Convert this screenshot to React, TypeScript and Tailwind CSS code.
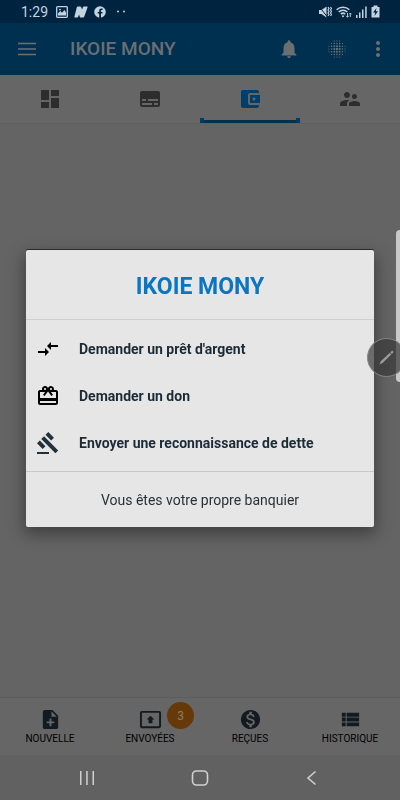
import React from 'react';
import type { IconType } from 'react-icons';
import {
  MdAccountBalanceWallet,
  MdCardGiftcard,
  MdCompareArrows,
  MdDashboard,
  MdGavel,
  MdMonetizationOn,
  MdMoreVert,
  MdNoteAdd,
  MdNotifications,
  MdPresentToAll,
  MdSubtitles,
  MdSupervisorAccount,
  MdViewList,
} from 'react-icons/md';

const TABS: { label: string; icon: IconType; active?: boolean }[] = [
  { label: 'Tableau de bord', icon: MdDashboard },
  { label: 'Cartes', icon: MdSubtitles },
  { label: 'Portefeuille', icon: MdAccountBalanceWallet, active: true },
  { label: 'Contacts', icon: MdSupervisorAccount },
];

const ACTIONS: { label: string; icon: IconType; color: string }[] = [
  { label: "Demander un prêt d'argent", icon: MdCompareArrows, color: 'text-black' },
  { label: 'Demander un don', icon: MdCardGiftcard, color: 'text-black' },
  { label: 'Envoyer une reconnaissance de dette', icon: MdGavel, color: 'text-[#22313c]' },
];

const NAV: { label: string; icon: IconType; badge?: number }[] = [
  { label: 'NOUVELLE', icon: MdNoteAdd },
  { label: 'ENVOYÉES', icon: MdPresentToAll, badge: 3 },
  { label: 'REÇUES', icon: MdMonetizationOn },
  { label: 'HISTORIQUE', icon: MdViewList },
];

// round halftone: dots shrink towards the rim
const DOTS = [-3, -2, -1, 0, 1, 2, 3].flatMap((x) =>
  [-3, -2, -1, 0, 1, 2, 3]
    .filter((y) => Math.hypot(x, y) < 3.3)
    .map((y) => ({ x, y, r: 1.25 - Math.hypot(x, y) * 0.22 })),
);

function HalftoneIcon() {
  return (
    <svg width="18" height="18" viewBox="0 0 18 18" fill="currentColor">
      {DOTS.map(({ x, y, r }) => (
        <circle key={`${x},${y}`} cx={9 + x * 2.7} cy={9 + y * 2.7} r={r} />
      ))}
    </svg>
  );
}

function StatusBar() {
  return (
    <div className="flex h-[23px] items-center bg-[#002440] pl-[21px] pr-5 text-[#c3d3e0]">
      <span className="text-[14px] leading-none">1:29</span>
      <div className="ml-2 flex items-center gap-1.5">
        <svg width="12" height="12" viewBox="0 0 12 12" fill="none" stroke="currentColor">
          <rect x="0.7" y="0.7" width="10.6" height="10.6" rx="0.8" strokeWidth="1.3" />
          <path d="M2 9.5V7.500l2.200-2.500 1.800 1.800L8.500 4 10 6.500v3z" fill="currentColor" stroke="none" />
          <circle cx="4" cy="3.600" r="0.900" fill="currentColor" stroke="none" />
        </svg>
        <svg width="14" height="12" viewBox="0 0 14 12" fill="currentColor">
          <path d="M2.800 1.200Q3.200.500 4 .500h2.200q.600 0 .900.600l1 2.400.800-2.300q.300-.700 1-.700h3.100q.900 0 .600.800l-3.300 9.300q-.300.900-1.200.900H6.800q-.700 0-.900-.600L5 8.500l-.800 2.200q-.300.800-1.100.800H.900q-.800 0-.500-.800z" />
        </svg>
        <svg width="12" height="12" viewBox="0 0 12 12">
          <circle cx="6" cy="6" r="5.800" fill="currentColor" />
          <path d="M5.200 12V7.600H3.700V5.900h1.500V4.700c0-1.500.9-2.300 2.200-2.300.6 0 1.200.1 1.200.1V4h-.7c-.700 0-.900.4-.9.900v1h1.600l-.3 1.700H7V12z" fill="#002440" />
        </svg>
        <svg width="10" height="12" viewBox="0 0 10 12" fill="currentColor" className="ml-1">
          <circle cx="2" cy="5.500" r="1" />
          <circle cx="8" cy="5.500" r="1" />
        </svg>
      </div>
      <div className="ml-auto flex items-center gap-1">
        <svg width="13" height="12" viewBox="0 0 13 12" fill="currentColor">
          <path d="M0 4h2.500L7.500 .500v11L2.500 8H0z" />
          <path d="M0 .500l8.500 10.500" stroke="#002440" strokeWidth="1" />
          <path d="M9 1l1 1.500L9 4l1 1.500L9 7l1 1.500L9 10M11.500 1l1 1.500-1 1.500 1 1.500-1 1.500 1 1.500-1 1.500" fill="none" stroke="currentColor" strokeWidth="1.200" />
        </svg>
        <svg width="16" height="12" viewBox="0 0 16 12" fill="none" stroke="currentColor" strokeWidth="1.500">
          <path d="M.600 3.800a9.200 9.200 0 0 1 12.800 0M2.700 6a6.200 6.200 0 0 1 8.600 0M4.800 8.200a3.200 3.200 0 0 1 4.400 0" />
          <circle cx="7" cy="10.200" r="1" fill="currentColor" stroke="none" />
          <path d="M11.500 7v4M10.200 9.800l1.300 1.500 1.300-1.500M14.300 11V7M13.200 8.300l1.100-1.300 1.200 1.300" strokeWidth="0.900" />
        </svg>
        <svg width="11" height="12" viewBox="0 0 11 12" fill="currentColor">
          <path d="M0 9h1.500v3H0zM3 6.500h1.500V12H3zM6 3.500h1.500V12H6zM9.200.500h1.500V12H9.200z" />
        </svg>
        <svg width="9" height="13" viewBox="0 0 9 13">
          <path d="M2.500.500h4V2h2v10.500H.5V2h2z" fill="currentColor" />
          <path d="M5.500 3L2 7.500h2.200L3.500 11 7 6.300H4.800z" fill="#002440" />
        </svg>
      </div>
    </div>
  );
}

function Header() {
  return (
    <header className="flex h-[52px] items-center bg-[#003050] px-[18px] text-[#6b6f72]">
      <button type="button" aria-label="Menu">
        <svg width="18" height="14" viewBox="0 0 18 14" fill="none" stroke="currentColor" strokeWidth="1.300">
          <path d="M0 1.500h18M0 7h18M0 12.500h18" />
        </svg>
      </button>
      <h1 className="ml-[34px] text-[19px] font-medium leading-6">IKOIE MONY</h1>
      <div className="-mr-2 ml-auto flex items-center">
        <button type="button" aria-label="Notifications" className="mr-7">
          <MdNotifications size={22} />
        </button>
        <button type="button" aria-label="Flou" className="mr-5">
          <HalftoneIcon />
        </button>
        <button type="button" aria-label="Plus">
          <MdMoreVert size={24} />
        </button>
      </div>
    </header>
  );
}

function Tabs() {
  return (
    <nav className="grid h-[49px] grid-cols-4 border-b border-[#606060] bg-[#666666]">
      {TABS.map(({ label, icon: Icon, active }) => (
        <button
          key={label}
          type="button"
          aria-label={label}
          className={`relative flex items-center justify-center ${active ? 'text-[#003f6b]' : 'text-[#2d2d2d]'}`}
        >
          <Icon size={24} />
          {active && (
            <span className="absolute inset-x-0 bottom-0 h-[5px] border-x-4 border-[#003a66]">
              <span className="mt-0.5 block h-[3px] bg-[#003050]" />
            </span>
          )}
        </button>
      ))}
    </nav>
  );
}

function BottomNav() {
  return (
    <nav className="grid h-[58px] grid-cols-4 border-t border-[#5d5d5d] bg-[#666666]">
      {NAV.map(({ label, icon: Icon, badge }) => (
        <button
          key={label}
          type="button"
          className="relative flex flex-col items-center pt-[10px] text-[#121b22]"
        >
          <Icon size={23} />
          <span className="mt-0.5 text-[10px] leading-3 text-black">{label}</span>
          {badge && (
            <span className="absolute left-[67px] top-1 flex size-[27px] items-center justify-center rounded-full bg-[#663a08] text-[12px] text-[#8f7b66]">
              {badge}
            </span>
          )}
        </button>
      ))}
    </nav>
  );
}

function SystemNav() {
  return (
    <div className="grid h-[45px] grid-cols-[1fr_auto_1fr] items-center bg-[#616161] text-[#d0d0d0]">
      <button type="button" aria-label="Applications récentes" className="mr-24 justify-self-end">
        <svg width="16" height="16" viewBox="0 0 16 16" fill="currentColor">
          <path d="M1 1h1.500v14H1zM7.200 1h1.500v14H7.200zM13.500 1H15v14h-1.500z" />
        </svg>
      </button>
      <button type="button" aria-label="Accueil">
        <svg width="18" height="16" viewBox="0 0 18 16" fill="none" stroke="currentColor" strokeWidth="1.600">
          <rect x="1.500" y="1" width="15" height="14" rx="4" />
        </svg>
      </button>
      <button type="button" aria-label="Retour" className="ml-24 justify-self-start">
        <svg width="16" height="16" viewBox="0 0 16 16" fill="none" stroke="currentColor" strokeWidth="1.600">
          <path d="M10.500 1.500L3 8l7.500 6.500" />
        </svg>
      </button>
    </div>
  );
}

function ActionDialog() {
  return (
    <div className="fixed inset-0 flex items-center justify-center px-[26px] pb-[47px] pt-6">
      <div
        role="dialog"
        aria-labelledby="dialog-title"
        className="w-full rounded-xs bg-[#e6e6e6] shadow-[0_-1px_0_#2a2a2a,0_6px_16px_2px_rgba(0,0,0,0.35)]"
      >
        <h2
          id="dialog-title"
          className="border-b border-[#cfcfcf] pb-[18px] pt-[23px] text-center text-[23px] font-bold leading-7 text-[#0b75c0]"
        >
          IKOIE MONY
        </h2>
        <ul className="py-[5px]">
          {ACTIONS.map(({ label, icon: Icon, color }) => (
            <li key={label}>
              <button type="button" className="flex h-[47px] w-full items-center gap-[19px] pl-[10px] text-left">
                <Icon size={24} className={color} />
                <span className="text-[14px] font-bold leading-5 text-[#1c2b36]">{label}</span>
              </button>
            </li>
          ))}
        </ul>
        <p className="border-t border-[#c8c8c8] pb-[17px] pt-[18px] text-center text-[14px] leading-5 text-[#2b3136]">
          Vous êtes votre propre banquier
        </p>
      </div>
    </div>
  );
}

// edge handle and floating pen that sit over the app
function EdgeTools() {
  return (
    <div className="pointer-events-none fixed inset-0 overflow-hidden">
      <div className="absolute right-0 top-[230px] h-[152px] w-1 rounded-l-full bg-[#c9c9c9]" />
      <div className="absolute -right-1.5 top-[338px] flex size-[39px] items-center justify-center rounded-full border border-[#858585] bg-[#383838]/70 text-[#9c9c9c]">
        <svg width="15" height="15" viewBox="0 0 15 15" fill="currentColor">
          <path d="M.500 14.500l1.300-3.300L10.600 3l1.700 1.600-8.800 8.500zM11.300 2.400l1.400-1.400q.500-.400.900 0l.600.600q.400.400 0 .900L12.900 4z" />
        </svg>
      </div>
    </div>
  );
}

export default function App() {
  return (
    <div className="flex min-h-screen flex-col bg-[#646464] font-['Roboto',sans-serif]">
      <StatusBar />
      <Header />
      <Tabs />
      <main className="flex-1" />
      <BottomNav />
      <SystemNav />
      <ActionDialog />
      <EdgeTools />
    </div>
  );
}
